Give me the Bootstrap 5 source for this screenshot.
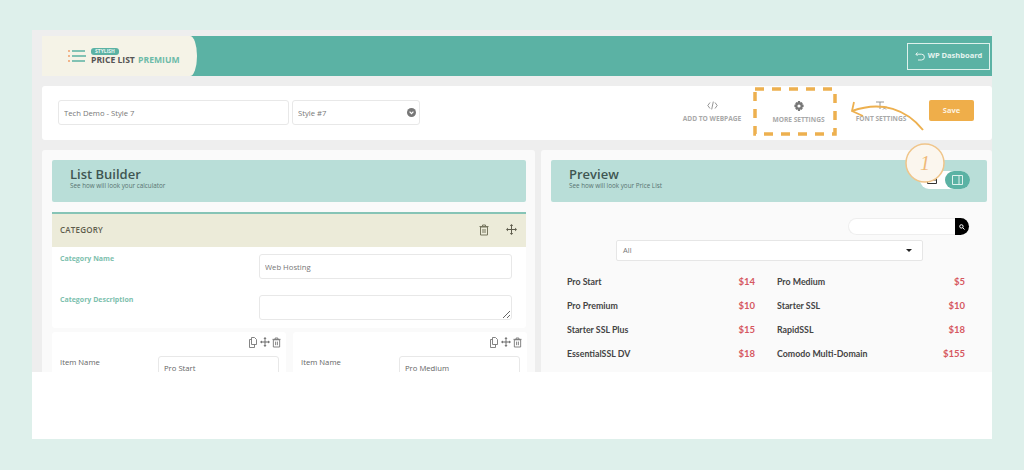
<!DOCTYPE html>
<html lang="en">
<head>
<meta charset="utf-8">
<title>Stylish Price List</title>
<link href="https://cdn.jsdelivr.net/npm/bootstrap@5.3.0/dist/css/bootstrap.min.css" rel="stylesheet">
<style>
html,body{height:470px;overflow:hidden}
body{background:#def0eb;font-family:"Open Sans","Liberation Sans",sans-serif;color:#555}
.frame{width:960px;height:409px;margin:30px 0 0 32px;background:#fff;position:relative}
.stage{height:342px;overflow:hidden;background:#eeeeee;padding:6px 0 0 10px}
.topbar{height:40px;background:#5bb2a4;width:950px}
.brand{width:155px;height:40px;background:#f5f3e7;border-radius:0 7px 7px 0/0 50% 50% 0;padding-left:26px;gap:5px}
.brand-text{line-height:1}
.pill{display:block;width:28px;background:#5bb2a4;color:#e8f5f1;font-size:5px;font-weight:700;border-radius:3px;text-align:center;line-height:7px;margin-bottom:1px}
.brand-name{font-size:8.6px;font-weight:700;color:#555;white-space:nowrap;display:block}
.brand-name span{color:#6dbba9;margin-left:1px}
.wp{width:83px;height:27px;margin-right:2px;border:1.5px solid #dff1ec;color:#e6f4f0;font-size:7.5px;font-weight:700;border-radius:0;padding:0;gap:3px}
.wp:hover{color:#e6f4f0}
.toolbar{height:54px;width:950px;margin-top:10px;background:#fff;border-radius:3px;padding:14px 18px 0 16px}
.toolbar .form-control{height:25px;font-size:7.7px;color:#777;border-color:#e8e8e8;border-radius:3px;padding:0 5px;box-shadow:none}
.name-in{width:231px}
.style-sel{width:128px;margin-left:3px;position:relative}
.chev{position:absolute;right:4px;top:8px}
.tool{font-size:6.6px;font-weight:700;color:#a9a9a9;text-align:center;white-space:nowrap;line-height:1;margin-top:-14px;padding-top:15px}
.tool svg{display:block;margin:0 auto 6px}
.t1{width:60px;margin-right:30px}.t2{width:53px;margin-right:30px}.t3{width:52px;margin-right:22px}
.save{width:45px;height:21px;background:#efae4a;color:#fdf3e0;font-size:7.5px;font-weight:700;border:0;border-radius:2px;padding:0}
.panes{margin-top:10px;gap:6px}
.pane{background:#fafafa;border:0;border-radius:3px;height:240px;overflow:hidden;padding:10px}
.pane>*{flex-shrink:0}
.pane-l{width:493px;padding-right:9px}
.pane-r{width:451px;padding-right:5px}
.phead{height:42px;background:#b9ded8;border-radius:2px;padding:6px 0 0 18px;color:#3f5652}
.phead h2{font-size:13px;font-weight:600;margin:0;line-height:16px;color:#3f5652;font-family:inherit}
.phead p{font-size:6.3px;margin:0;line-height:7px;color:#587370}
.cat{margin-top:10px;height:35px;background:#ecebd9;border-top:2px solid #86c4b6;padding:0 9px 2px 8px;font-size:8px;font-weight:600;color:#5e5c4c;letter-spacing:.2px}
.cat svg{margin-left:14px}
.catbody{background:#fff;padding:7px 14px 8px 8px;border-radius:0 0 3px 3px;height:81px}
.lab{font-size:7px;font-weight:700;color:#7dbfae;margin:0;line-height:10px}
.catbody .form-control{width:253px;height:25px;font-size:7.7px;color:#777;border-color:#e8e8e8;border-radius:3px;padding:0 5px;box-shadow:none;min-height:0}
.catbody .row2{margin-top:16px}
.items{margin-top:4px;gap:7px}
.item{background:#fff;flex:1 1 0;height:60px;padding:5px 7px 0 8px;border-radius:3px}
.itools{gap:2px;height:13px;margin-right:-2px}
.ifield{margin-top:6px}
.ifield label{font-size:7.7px;color:#666;width:98px;margin:1px 0 0}
.ifield .form-control{width:121px;height:30px;font-size:7.7px;color:#666;border-color:#e8e8e8;border-radius:3px;padding:6px 5px 12px;box-shadow:none;min-height:0}
.phead-wrap{position:relative}
.toggle{position:absolute;right:17px;top:11px;width:50px;height:18px;background:#fff;border-radius:9px}
.toggle .on{position:absolute;right:0;top:0;width:25px;height:18px;background:#5bb2a4;border-radius:9px}
.toggle .off{position:absolute;left:7px;top:4px}
.srch{margin:16px 18px 0 0;height:17px}
.srch .box{width:107px;height:17px;background:#fff;border:1px solid #eee;border-right:0;border-radius:9px 0 0 9px}
.srch .go{width:14px;height:17px;background:#000;border-radius:0 9px 9px 0}
.allsel{width:307px;height:21px;margin:5px 0 0 65px;background:#fff;border:1px solid #e6e6e6;border-radius:2px;padding:0 10px 0 6px;font-size:7.5px;color:#777}
.caret{width:0;height:0;border-left:3px solid transparent;border-right:3px solid transparent;border-top:3px solid #222}
.prices{margin:11px 0 0 16px;width:398px;column-gap:22px;font-family:"Lato","Noto Sans",sans-serif;font-size:8.8px;font-weight:700;color:#444;display:grid;grid-template-columns:1fr 1fr;row-gap:0}
.prow{height:24px;line-height:20px}
.prow b{color:#d6575f;font-weight:700;font-size:9.5px}
.anno{position:absolute;left:0;top:0;width:960px;height:409px;pointer-events:none}
.num{font-family:"Liberation Serif",serif;font-style:italic;font-size:20px;fill:#efb978}
</style>
</head>
<body>
<div class="frame">
  <div class="stage">
    <div class="topbar d-flex align-items-center justify-content-between">
      <div class="brand d-flex align-items-center">
        <svg width="18" height="14" viewBox="0 0 18 14"><g fill="#ee9f6b"><circle cx="1" cy="2" r="1"/><circle cx="1" cy="7" r="1"/><circle cx="1" cy="12" r="1"/></g><g stroke="#5bb2a4" stroke-width="1.5"><path d="M4 2h13M4 7h14M4 12h13"/></g></svg>
        <div class="brand-text">
          <span class="pill">STYLISH</span>
          <span class="brand-name">PRICE LIST <span>PREMIUM</span></span>
        </div>
      </div>
      <a class="btn wp d-flex align-items-center justify-content-center" href="#">
        <svg width="10" height="9" viewBox="0 0 10 9" fill="none" stroke="#e6f4f0" stroke-width="1"><path d="M2.500.5.800 2.200 2.500 3.900M1 2.200h5.500a2.900 2.900 0 0 1 0 5.800H3"/></svg>
        WP Dashboard
      </a>
    </div>

    <div class="toolbar d-flex">
      <input class="form-control name-in" value="Tech Demo - Style 7">
      <div class="style-sel">
        <input class="form-control" value="Style #7">
        <svg class="chev" width="9" height="9" viewBox="0 0 9 9"><circle cx="4.5" cy="4.5" r="4.5" fill="#777"/><path d="M2.6 3.6 4.5 5.6 6.4 3.6" fill="none" stroke="#fff" stroke-width="1.2"/></svg>
      </div>
      <div class="ms-auto d-flex">
        <div class="tool t1"><svg width="11" height="9" viewBox="0 0 11 9" fill="none" stroke="#8a8a8a" stroke-width=".9"><path d="M3 1.5 .8 4.5 3 7.5M8 1.5l2.2 3L8 7.5M6.3 .6 4.7 8.4"/></svg>ADD TO WEBPAGE</div>
        <div class="tool t2"><svg width="10" height="10" viewBox="0 0 10 10"><path fill="#777" fill-rule="evenodd" d="M4 0h2l.3 1.4 1-.5 1.500 1.400-.6 1 1.400.5v2.200l-1.400.4.6 1.100-1.500 1.400-1-.6L6 10H4l-.3-1.700-1 .6-1.500-1.400.6-1.100L.4 6V3.800l1.400-.5-.6-1 1.500-1.400 1 .5zM5 3.400a1.600 1.600 0 1 0 0 3.200 1.600 1.600 0 0 0 0-3.200z"/></svg>MORE SETTINGS</div>
        <div class="tool t3"><svg width="12" height="9" viewBox="0 0 12 9" fill="none" stroke="#8a8a8a" stroke-width=".9"><path d="M1 1h8M5 1v7M8 5.500l3 3M11 5.500l-3 3"/></svg>FONT SETTINGS</div>
        <button class="btn save" type="button">Save</button>
      </div>
    </div>

    <div class="panes d-flex">
      <div class="card pane pane-l">
        <div class="phead"><h2>List Builder</h2><p>See how will look your calculator</p></div>
        <div class="cat d-flex align-items-center">
          <span class="me-auto">CATEGORY</span>
          <svg width="10" height="12" viewBox="0 0 10 12" fill="none" stroke="#77765f"><path d="M1.500 3v8h7V3zM.5 2.500h9M3.500 2.500V1h3v1.500M4 5v4M6 5v4"/></svg>
          <svg width="11" height="11" viewBox="0 0 11 11" fill="#5e5c4c" style="margin-left:17px"><path d="M5.500 0 7.200 2H6v3h3V3.800L11 5.500 9 7.200V6H6v3h1.200L5.500 11 3.800 9H5V6H2v1.200L0 5.500 2 3.800V5h3V2H3.800z"/></svg>
        </div>
        <div class="catbody">
          <div class="d-flex justify-content-between"><p class="lab">Category Name</p><input class="form-control" value="Web Hosting"></div>
          <div class="d-flex justify-content-between row2"><p class="lab">Category Description</p><textarea class="form-control"></textarea></div>
        </div>
        <div class="items d-flex">
          <div class="item">
            <div class="itools d-flex justify-content-end">
              <svg width="10" height="11" viewBox="0 0 10 11" fill="none" stroke="#777" stroke-width=".9"><path d="M3.500.5h3l2 2v5h-5zM3.500 2.500h-2v8h5v-3"/></svg>
              <svg width="10" height="10" viewBox="0 0 11 11" fill="#666"><path d="M5.500 0 7.200 2H6v3h3V3.800L11 5.500 9 7.200V6H6v3h1.200L5.500 11 3.800 9H5V6H2v1.200L0 5.500 2 3.800V5h3V2H3.800z"/></svg>
              <svg width="9" height="11" viewBox="0 0 10 12" fill="none" stroke="#777"><path d="M1.500 3v8h7V3zM.5 2.500h9M3.500 2.500V1h3v1.500M4 5v4M6 5v4"/></svg>
            </div>
            <div class="ifield d-flex"><label>Item Name</label><input class="form-control" value="Pro Start"></div>
          </div>
          <div class="item">
            <div class="itools d-flex justify-content-end">
              <svg width="10" height="11" viewBox="0 0 10 11" fill="none" stroke="#777" stroke-width=".9"><path d="M3.500.5h3l2 2v5h-5zM3.500 2.500h-2v8h5v-3"/></svg>
              <svg width="10" height="10" viewBox="0 0 11 11" fill="#666"><path d="M5.500 0 7.200 2H6v3h3V3.800L11 5.500 9 7.200V6H6v3h1.200L5.500 11 3.800 9H5V6H2v1.200L0 5.500 2 3.800V5h3V2H3.800z"/></svg>
              <svg width="9" height="11" viewBox="0 0 10 12" fill="none" stroke="#777"><path d="M1.500 3v8h7V3zM.5 2.500h9M3.500 2.500V1h3v1.500M4 5v4M6 5v4"/></svg>
            </div>
            <div class="ifield d-flex"><label>Item Name</label><input class="form-control" value="Pro Medium"></div>
          </div>
        </div>
      </div>

      <div class="card pane pane-r">
        <div class="phead-wrap">
          <div class="phead"><h2>Preview</h2><p>See how will look your Price List</p></div>
          <div class="toggle">
            <svg class="off" width="10" height="10" viewBox="0 0 10 10" fill="none" stroke="#333"><path d="M.5 1.500h9v7h-9zM.5 5h9"/></svg>
            <span class="on d-flex align-items-center justify-content-center"><svg width="11" height="10" viewBox="0 0 11 10" fill="none" stroke="#dff1ed"><path d="M.5.500h10v9H.5zM7 .500v9"/></svg></span>
          </div>
        </div>
        <div class="srch d-flex justify-content-end">
          <div class="box"></div>
          <div class="go d-flex align-items-center justify-content-center"><svg width="6" height="6" viewBox="0 0 6 6" fill="none" stroke="#fff"><circle cx="2.400" cy="2.400" r="1.700"/><path d="M3.700 3.700 5.500 5.500"/></svg></div>
        </div>
        <div class="allsel d-flex align-items-center justify-content-between"><span>All</span><span class="caret"></span></div>
        <div class="prices">
          <div class="prow d-flex justify-content-between"><span>Pro Start</span><b>$14</b></div>
          <div class="prow d-flex justify-content-between"><span>Pro Medium</span><b>$5</b></div>
          <div class="prow d-flex justify-content-between"><span>Pro Premium</span><b>$10</b></div>
          <div class="prow d-flex justify-content-between"><span>Starter SSL</span><b>$10</b></div>
          <div class="prow d-flex justify-content-between"><span>Starter SSL Plus</span><b>$15</b></div>
          <div class="prow d-flex justify-content-between"><span>RapidSSL</span><b>$18</b></div>
          <div class="prow d-flex justify-content-between"><span>EssentialSSL DV</span><b>$18</b></div>
          <div class="prow d-flex justify-content-between"><span>Comodo Multi-Domain</span><b>$155</b></div>
        </div>
      </div>
    </div>
  </div>

  <svg class="anno" viewBox="0 0 960 409" fill="none">
    <rect x="723" y="59" width="80" height="45" stroke="#edb04f" stroke-width="3.500" stroke-dasharray="9 8"/>
    <path d="M891 100C875 80 850 70 820 81" stroke="#edb04f" stroke-width="2"/>
    <path d="M822 72 820 81 831 86" stroke="#edb04f" stroke-width="1.800"/>
    <circle cx="893" cy="133" r="19" fill="#fbf6ee" stroke="#f0c58a" stroke-width="1.500"/>
    <text class="num" x="893" y="140" text-anchor="middle">1</text>
  </svg>
</div>
<script src="https://cdn.jsdelivr.net/npm/bootstrap@5.3.0/dist/js/bootstrap.bundle.min.js"></script>
</body>
</html>
